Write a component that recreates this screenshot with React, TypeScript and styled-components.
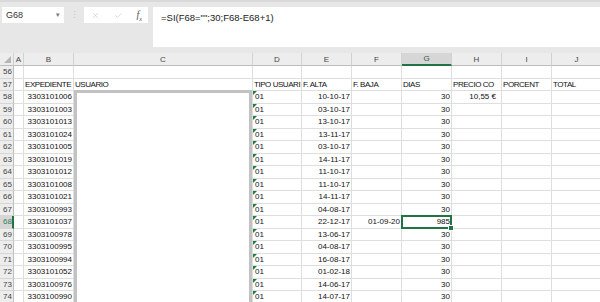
import React from 'react'
import styled, { createGlobalStyle, css } from 'styled-components'
import { X, Check } from 'lucide-react'

const GlobalStyle = createGlobalStyle`
  html, body {
    margin: 0;
    padding: 0;
    background: #ffffff;
  }
  body {
    font-family: 'Liberation Sans', Arial, sans-serif;
  }
`

const COLS = [14, 10, 50, 179, 49, 50, 50, 50, 50, 50, 50]
const LETTERS = ['A', 'B', 'C', 'D', 'E', 'F', 'G', 'H', 'I', 'J']

type Row = {
  n: number
  exp: string
  alta: string
  baja?: string
  dias: string
  precio?: string
}

const rows: Row[] = [
  { n: 58, exp: '3303101006', alta: '10-10-17', dias: '30', precio: '10,55 €' },
  { n: 59, exp: '3303101003', alta: '03-10-17', dias: '30' },
  { n: 60, exp: '3303101013', alta: '13-10-17', dias: '30' },
  { n: 61, exp: '3303101024', alta: '13-11-17', dias: '30' },
  { n: 62, exp: '3303101005', alta: '03-10-17', dias: '30' },
  { n: 63, exp: '3303101019', alta: '14-11-17', dias: '30' },
  { n: 64, exp: '3303101012', alta: '11-10-17', dias: '30' },
  { n: 65, exp: '3303101008', alta: '11-10-17', dias: '30' },
  { n: 66, exp: '3303101021', alta: '14-11-17', dias: '30' },
  { n: 67, exp: '3303100993', alta: '04-08-17', dias: '30' },
  { n: 68, exp: '3303101037', alta: '22-12-17', baja: '01-09-20', dias: '985' },
  { n: 69, exp: '3303100978', alta: '13-06-17', dias: '30' },
  { n: 70, exp: '3303100995', alta: '04-08-17', dias: '30' },
  { n: 71, exp: '3303100994', alta: '16-08-17', dias: '30' },
  { n: 72, exp: '3303101052', alta: '01-02-18', dias: '30' },
  { n: 73, exp: '3303100976', alta: '14-06-17', dias: '30' },
  { n: 74, exp: '3303100990', alta: '14-07-17', dias: '30' },
]

const App = (): JSX.Element => {
  return (
    <>
      <GlobalStyle />
      <Window>
        <FormulaArea>
          <NameBox>
            <span>G68</span>
            <Caret>▾</Caret>
          </NameBox>
          <Grip>⋮</Grip>
          <FxBox>
            <X size={9} strokeWidth={1.4} color='#bdbdbd' />
            <Check size={9} strokeWidth={1.4} color='#bdbdbd' />
            <Fx>
              f<sub>x</sub>
            </Fx>
          </FxBox>
          <FormulaInput>=SI(F68="";30;F68-E68+1)</FormulaInput>
        </FormulaArea>

        <Sheet>
          <Corner>
            <SelectAll />
          </Corner>
          {LETTERS.map((l) => (
            <ColHead key={l} $active={l === 'G'}>
              {l}
            </ColHead>
          ))}

          <RowHead>56</RowHead>
          {LETTERS.map((l) => (
            <Cell key={'56' + l} />
          ))}

          <RowHead>57</RowHead>
          <Cell />
          <Cell $title>EXPEDIENTE</Cell>
          <Cell $title>USUARIO</Cell>
          <Cell $title>TIPO USUARI</Cell>
          <Cell $title>F. ALTA</Cell>
          <Cell $title>F. BAJA</Cell>
          <Cell $title>DIAS</Cell>
          <Cell $title>PRECIO CO</Cell>
          <Cell $title>PORCENT</Cell>
          <Cell $title>TOTAL</Cell>

          {rows.map((r) => (
            <React.Fragment key={r.n}>
              <RowHead $active={r.n === 68}>{r.n}</RowHead>
              <Cell />
              <Cell $right>{r.exp}</Cell>
              <Cell />
              <Cell $flag>01</Cell>
              <Cell $right>{r.alta}</Cell>
              <Cell $right>{r.baja}</Cell>
              <Cell $right $selected={r.n === 68}>
                {r.dias}
              </Cell>
              <Cell $right $pad={5}>
                {r.precio}
              </Cell>
              <Cell />
              <Cell />
            </React.Fragment>
          ))}

          <Picture />
        </Sheet>
      </Window>
    </>
  )
}

export default App

const Window = styled.div`
  width: 600px;
  height: 302px;
  overflow: hidden;
  background: #ffffff;
  position: relative;
`

const FormulaArea = styled.div`
  height: 53px;
  box-sizing: border-box;
  background: #e7e7e7;
  border-top: 2px solid #d9d9d9;
  padding: 5px 0 0 2px;
  display: flex;
  align-items: flex-start;
`

const NameBox = styled.div`
  width: 62px;
  height: 16px;
  box-sizing: border-box;
  background: #ffffff;
  display: flex;
  align-items: center;
  justify-content: space-between;
  padding: 0 4px 0 4px;
  font-size: 9px;
  color: #333333;
`

const Caret = styled.span`
  font-size: 7px;
  color: #777777;
`

const Grip = styled.div`
  width: 20px;
  height: 16px;
  display: flex;
  align-items: center;
  justify-content: center;
  color: #c4c4c4;
  font-size: 9px;
`

const FxBox = styled.div`
  width: 64px;
  height: 16px;
  background: #ffffff;
  display: flex;
  align-items: center;
  justify-content: space-between;
  padding: 0 6px 0 7px;
  box-sizing: border-box;
`

const Fx = styled.span`
  font-family: 'Liberation Serif', 'Times New Roman', serif;
  font-style: italic;
  font-size: 10px;
  color: #555555;
  sub {
    font-size: 6px;
  }
`

const FormulaInput = styled.div`
  margin-left: 5px;
  flex: 1;
  height: 40px;
  background: #ffffff;
  box-sizing: border-box;
  padding: 5px 0 0 8px;
  font-size: 9.5px;
  color: #222222;
`

const Sheet = styled.div`
  position: relative;
  display: grid;
  grid-template-columns: ${COLS.map((c) => c + 'px').join(' ')};
  grid-template-rows: 13px;
  grid-auto-rows: 12.5px;
  font-size: 8px;
  color: #111111;
`

const headBase = css`
  box-sizing: border-box;
  background: #ededed;
  color: #444444;
  display: flex;
  align-items: center;
  overflow: hidden;
  white-space: nowrap;
`

const Corner = styled.div`
  ${headBase};
  position: relative;
  border-right: 1px solid #cfcfcf;
  border-bottom: 1px solid #bdbdbd;
`

const SelectAll = styled.div`
  position: absolute;
  right: 2px;
  bottom: 2px;
  width: 0;
  height: 0;
  border-left: 7px solid transparent;
  border-bottom: 7px solid #b5b5b5;
`

const ColHead = styled.div<{ $active?: boolean }>`
  ${headBase};
  justify-content: center;
  border-right: 1px solid #d2d2d2;
  border-bottom: 1px solid #bdbdbd;
  ${(p) =>
    p.$active &&
    css`
      background: #d6d6d6;
      border-bottom: 2px solid #217346;
      color: #2f5e43;
    `}
`

const RowHead = styled.div<{ $active?: boolean }>`
  ${headBase};
  padding-left: 3px;
  border-right: 1px solid #bdbdbd;
  border-bottom: 1px solid #d6d6d6;
  ${(p) =>
    p.$active &&
    css`
      background: #d6d6d6;
      border-right: 2px solid #217346;
      color: #3c7a55;
    `}
`

const Cell = styled.div<{
  $right?: boolean
  $flag?: boolean
  $title?: boolean
  $selected?: boolean
  $pad?: number
}>`
  position: relative;
  box-sizing: border-box;
  border-right: 1px solid #dedede;
  border-bottom: 1px solid #dedede;
  display: flex;
  align-items: center;
  justify-content: ${(p) => (p.$right ? 'flex-end' : 'flex-start')};
  padding: 0 ${(p) => p.$pad ?? 1}px 0 2px;
  white-space: nowrap;
  overflow: hidden;
  ${(p) =>
    p.$title &&
    css`
      letter-spacing: -0.45px;
      padding-left: 1px;
    `}
  ${(p) =>
    p.$flag &&
    css`
      &::before {
        content: '';
        position: absolute;
        left: 0;
        top: 0;
        border-top: 4px solid #1e7b45;
        border-right: 4px solid transparent;
      }
    `}
  ${(p) =>
    p.$selected &&
    css`
      overflow: visible;
      &::after {
        content: '';
        position: absolute;
        left: -1px;
        top: -1px;
        right: -1px;
        bottom: -1px;
        border: 2px solid #217346;
        z-index: 2;
      }
      &::before {
        content: '';
        position: absolute;
        right: -3px;
        bottom: -3px;
        width: 4px;
        height: 4px;
        background: #217346;
        border: 1px solid #ffffff;
        z-index: 3;
      }
    `}
`

const Picture = styled.div`
  position: absolute;
  left: 74px;
  top: 37px;
  width: 178px;
  height: 240px;
  box-sizing: border-box;
  background: #ffffff;
  border: 3px solid #c2c2c2;
  z-index: 1;
`
